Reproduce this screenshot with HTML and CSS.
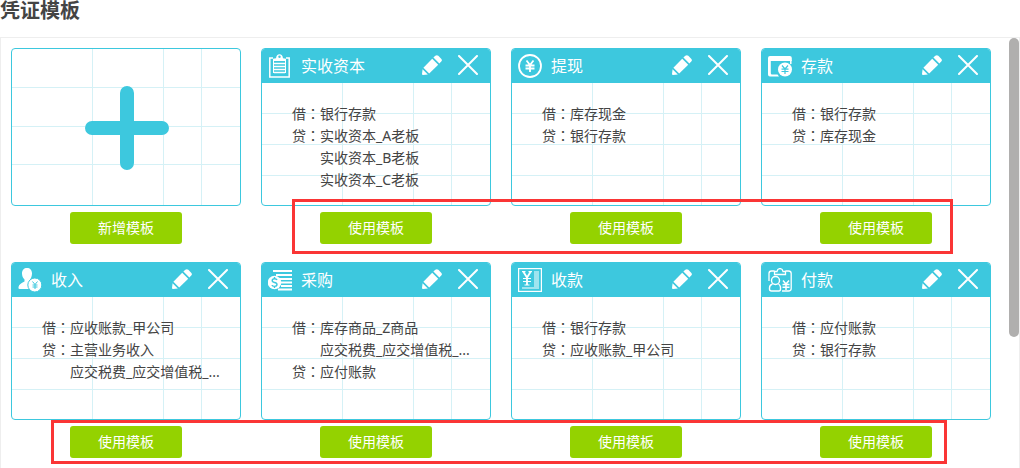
FILE: index.html
```html
<!DOCTYPE html>
<html lang="zh-CN">
<head>
  <meta charset="UTF-8">
  <meta name="viewport" content="width=device-width, initial-scale=1.0">
  <title>凭证模板</title>
  <link rel="stylesheet" href="styles.css">
</head>
<body>
  <!-- shared icons -->
  <svg class="sprite" width="0" height="0">
    <symbol id="icon-edit" viewBox="0 0 20 20">
      <path d="M10.2 3.8L16.2 9.8L7.2 18.6L1.4 12.8Z" fill="currentColor"/>
      <path d="M11.4 2.6L13.3 .8Q14.8 -.4 16.3 .8L19.2 3.7Q20.6 5.2 19.2 6.6L17.4 8.6Z" fill="currentColor"/>
      <path d="M.6 14.2L5.8 19.4L1 20Q0 20 0 19Z" fill="currentColor"/>
    </symbol>
    <symbol id="icon-close" viewBox="0 0 20 20">
      <path d="M1 1L19 19M19 1L1 19" stroke="currentColor" stroke-width="2" stroke-linecap="round"/>
    </symbol>
  </svg>

  <h1>凭证模板</h1>

  <div class="panel">
    <div class="template-list">
      <div class="template">
        <button class="card card-add" type="button" aria-label="新增模板">
          <svg class="plus" width="84" height="84" viewBox="0 0 84 84">
            <path d="M42 7V77M7 42H77" stroke="currentColor" stroke-width="14" stroke-linecap="round"/>
          </svg>
        </button>
        <button class="btn" type="button">新增模板</button>
      </div>

      <div class="template">
        <div class="card">
          <div class="card-header">
            <svg class="icon" viewBox="0 0 24 24" fill="none" stroke="currentColor">
              <path d="M5 4H1.8V23H21.2V4H18" stroke-width="1.5"/>
              <path d="M5.5 6V19M17.5 6V19" stroke-width="1"/>
              <path d="M5 7V4.8L8 4.2Q8.5 .3 11.5 .3Q14.5 .3 15 4.2L18 4.8V7Z" fill="currentColor" stroke="none"/>
              <circle cx="11.5" cy="2.8" r="1.2" fill="#3dc8de" stroke="none"/>
              <path d="M6 9.5H17M6 12.5H17M6 15.5H17M6 18.5H17" stroke-width="1.4"/>
            </svg>
            <h2>实收资本</h2>
            <div class="actions">
              <button type="button" aria-label="编辑"><svg><use href="#icon-edit"/></svg></button>
              <button type="button" aria-label="删除"><svg><use href="#icon-close"/></svg></button>
            </div>
          </div>
          <dl class="entries">
            <dt>借<span class="colon" lang="zh-TW">：</span></dt>
            <dd>银行存款</dd>
            <dt>贷<span class="colon" lang="zh-TW">：</span></dt>
            <dd>实收资本_A老板</dd>
            <dd>实收资本_B老板</dd>
            <dd>实收资本_C老板</dd>
          </dl>
        </div>
        <button class="btn" type="button">使用模板</button>
      </div>

      <div class="template">
        <div class="card">
          <div class="card-header">
            <svg class="icon" viewBox="0 0 24 24" fill="none" stroke="currentColor">
              <circle cx="12" cy="12" r="11" stroke-width="1.8"/>
              <path d="M8.5 6.5L12 11L15.5 6.5M12 11V18M7.5 11.5H16.5M7.5 14.5H16.5" stroke-width="1.8"/>
            </svg>
            <h2>提现</h2>
            <div class="actions">
              <button type="button" aria-label="编辑"><svg><use href="#icon-edit"/></svg></button>
              <button type="button" aria-label="删除"><svg><use href="#icon-close"/></svg></button>
            </div>
          </div>
          <dl class="entries">
            <dt>借<span class="colon" lang="zh-TW">：</span></dt>
            <dd>库存现金</dd>
            <dt>贷<span class="colon" lang="zh-TW">：</span></dt>
            <dd>银行存款</dd>
          </dl>
        </div>
        <button class="btn" type="button">使用模板</button>
      </div>

      <div class="template">
        <div class="card">
          <div class="card-header">
            <svg class="icon" viewBox="0 0 24 24" fill="none" stroke="currentColor">
              <path d="M23.8 7V4Q23.8 2 21.8 2H2Q0 2 0 4V20.5Q0 22.5 2 22.5H11L9.5 20.5H4Q2.8 20.5 2.8 19.3V7Z" fill="currentColor" stroke="none"/>
              <path d="M22.8 6V10" stroke-width="1.5"/>
              <circle cx="17" cy="15.5" r="7" fill="currentColor" stroke="none"/>
              <path d="M14 11.5L17 15L20 11.5M17 15V20M13.5 15.2H20.5M13.5 17.5H20.5" stroke="#3dc8de" stroke-width="1.2"/>
            </svg>
            <h2>存款</h2>
            <div class="actions">
              <button type="button" aria-label="编辑"><svg><use href="#icon-edit"/></svg></button>
              <button type="button" aria-label="删除"><svg><use href="#icon-close"/></svg></button>
            </div>
          </div>
          <dl class="entries">
            <dt>借<span class="colon" lang="zh-TW">：</span></dt>
            <dd>银行存款</dd>
            <dt>贷<span class="colon" lang="zh-TW">：</span></dt>
            <dd>库存现金</dd>
          </dl>
        </div>
        <button class="btn" type="button">使用模板</button>
      </div>

      <div class="template">
        <div class="card">
          <div class="card-header">
            <svg class="icon" viewBox="0 0 24 24" fill="none" stroke="currentColor">
              <path d="M9 0C12 0 14 2 14 5.5C14 8 13 10.5 12 11.5V13L14 14.5L12 21H1.5Q0 21 .5 19C1 16 3 15.500 6.500 13.500V11.500C5 10 4 8 4 5.500C4 2 6 0 9 0Z" fill="currentColor" stroke="none"/>
              <circle cx="16.8" cy="17" r="7" fill="currentColor" stroke="#3dc8de" stroke-width="1"/>
              <path d="M14.5 13.5L17 16.5L19.5 13.5M17 16.5V21M14.5 17H19.5M14.5 19H19.5" stroke="#3dc8de" stroke-width="1"/>
            </svg>
            <h2>收入</h2>
            <div class="actions">
              <button type="button" aria-label="编辑"><svg><use href="#icon-edit"/></svg></button>
              <button type="button" aria-label="删除"><svg><use href="#icon-close"/></svg></button>
            </div>
          </div>
          <dl class="entries">
            <dt>借<span class="colon" lang="zh-TW">：</span></dt>
            <dd>应收账款_甲公司</dd>
            <dt>贷<span class="colon" lang="zh-TW">：</span></dt>
            <dd>主营业务收入</dd>
            <dd>应交税费_应交增值税_...</dd>
          </dl>
        </div>
        <button class="btn" type="button">使用模板</button>
      </div>

      <div class="template">
        <div class="card">
          <div class="card-header">
            <svg class="icon" viewBox="0 0 24 24" fill="none" stroke="currentColor">
              <path d="M5 3H24M8 7H24M11 11H24M13 14.500H24M13 18H24M10 21.500H24" stroke-width="2"/>
              <circle cx="6.500" cy="14.500" r="6.800" fill="currentColor" stroke="none"/>
              <path d="M9 12Q8.5 10.800 6.500 10.800Q4.200 10.800 4.200 12.600Q4.200 14.200 6.500 14.500Q9 14.900 9 16.600Q9 18.400 6.500 18.400Q4.200 18.400 4 17M6.500 9V11M6.500 18V20" stroke="#3dc8de" stroke-width="1.400"/>
            </svg>
            <h2>采购</h2>
            <div class="actions">
              <button type="button" aria-label="编辑"><svg><use href="#icon-edit"/></svg></button>
              <button type="button" aria-label="删除"><svg><use href="#icon-close"/></svg></button>
            </div>
          </div>
          <dl class="entries">
            <dt>借<span class="colon" lang="zh-TW">：</span></dt>
            <dd>库存商品_Z商品</dd>
            <dd>应交税费_应交增值税_...</dd>
            <dt>贷<span class="colon" lang="zh-TW">：</span></dt>
            <dd>应付账款</dd>
          </dl>
        </div>
        <button class="btn" type="button">使用模板</button>
      </div>

      <div class="template">
        <div class="card">
          <div class="card-header">
            <svg class="icon" viewBox="0 0 24 24" fill="none" stroke="currentColor">
              <rect x=".6" y=".6" width="22.8" height="22.8" stroke-width="1.2"/>
              <path d="M16 3H21V21H4V19H16Z" fill="currentColor" stroke="none" opacity=".5"/>
              <path d="M5.5 4L9 9.5L12.5 4M9 9.5V17" stroke-width="1.8"/>
              <path d="M4 3.7H7.5M10.5 3.7H14M5 10.5H13M5 13.5H13M6.5 17H11.5" stroke-width="1.2"/>
            </svg>
            <h2>收款</h2>
            <div class="actions">
              <button type="button" aria-label="编辑"><svg><use href="#icon-edit"/></svg></button>
              <button type="button" aria-label="删除"><svg><use href="#icon-close"/></svg></button>
            </div>
          </div>
          <dl class="entries">
            <dt>借<span class="colon" lang="zh-TW">：</span></dt>
            <dd>银行存款</dd>
            <dt>贷<span class="colon" lang="zh-TW">：</span></dt>
            <dd>应收账款_甲公司</dd>
          </dl>
        </div>
        <button class="btn" type="button">使用模板</button>
      </div>

      <div class="template">
        <div class="card">
          <div class="card-header">
            <svg class="icon" viewBox="0 0 24 24" fill="none" stroke="currentColor">
              <path d="M1 13V5.5Q1 3 3.5 3H6.5M17.5 3H20.5Q23.2 3 23.2 5.5V20.5Q23.2 23 20.5 23H14" stroke-width="1.3"/>
              <path d="M6.5 6.5V3.5H9Q9.5 .6 12 .6Q14.5 .6 15 3.5H17.5V6.5Z" stroke-width="1.3"/>
              <circle cx="7.5" cy="12.5" r="4" stroke-width="1.4"/>
              <path d="M4.5 16Q1.5 17 1.5 20V21Q1.5 23 3.5 23H11Q12.5 23 12.5 21V19Q12 17 10.5 16" stroke-width="1.4"/>
              <path d="M15 12.5L18 16L21 12.5M18 16V22M14.5 16.5H21.500M14.5 19.2H21.500" stroke-width="1.5"/>
            </svg>
            <h2>付款</h2>
            <div class="actions">
              <button type="button" aria-label="编辑"><svg><use href="#icon-edit"/></svg></button>
              <button type="button" aria-label="删除"><svg><use href="#icon-close"/></svg></button>
            </div>
          </div>
          <dl class="entries">
            <dt>借<span class="colon" lang="zh-TW">：</span></dt>
            <dd>应付账款</dd>
            <dt>贷<span class="colon" lang="zh-TW">：</span></dt>
            <dd>银行存款</dd>
          </dl>
        </div>
        <button class="btn" type="button">使用模板</button>
      </div>
    </div>

    <div class="scroll-thumb"></div>
    <!-- red frames around the "use template" buttons -->
    <div class="mark mark-top"></div>
    <div class="mark mark-bottom"></div>
  </div>
</body>
</html>
```

FILE: styles.css
```css
* {
  box-sizing: border-box;
}

body {
  margin: 0;
  height: 100vh;
  display: flex;
  flex-direction: column;
  overflow: hidden;
  background: #fff;
  color: #444;
  font-family: "Noto Sans", "Noto Sans CJK SC", sans-serif;
  font-size: 14px;
}

h1 {
  margin: 0 0 15px;
  font-size: 20px;
  line-height: 22px;
}

h2 {
  margin: 0;
  font-size: 16px;
  font-weight: normal;
  line-height: 24px;
}

button {
  padding: 0;
  border: none;
  background: none;
  color: inherit;
  font: inherit;
  cursor: pointer;
}

.sprite {
  position: absolute;
}

.panel {
  position: relative;
  flex: 1;
  min-height: 0;
  padding: 10px;
  overflow: hidden;
  border: 1px solid #eee;
  border-bottom: none;
}

.template-list {
  display: grid;
  grid-template-columns: repeat(auto-fill, 230px);
  gap: 18px 20px;
}

.template {
  display: flex;
  flex-direction: column;
  align-items: center;
  gap: 6px;
}

.card {
  width: 100%;
  height: 158px;
  border: 1px solid #3dc8de;
  border-radius: 4px;
  overflow: hidden;
  /* ruled paper lines */
  background-image:
    linear-gradient(#d5f1f6, #d5f1f6),
    linear-gradient(#d5f1f6, #d5f1f6),
    linear-gradient(#d5f1f6, #d5f1f6),
    linear-gradient(#d5f1f6, #d5f1f6),
    linear-gradient(#d5f1f6, #d5f1f6),
    linear-gradient(#d5f1f6, #d5f1f6);
  background-repeat: no-repeat;
  background-size: 1px 100%, 1px 100%, 1px 100%, 100% 1px, 100% 1px, 100% 1px;
  background-position: 80px 0, 151px 0, 189px 0, 0 64px, 0 95px, 0 126px;
}

.card-add {
  display: flex;
  align-items: center;
  justify-content: center;
  padding: 2px 0 0 2px;
  color: #3dc8de;
  background-position: 80px 0, 151px 0, 189px 0, 0 38px, 0 77px, 0 115px;
}

.plus {
  display: block;
}

.card-header {
  display: flex;
  align-items: flex-start;
  gap: 9px;
  height: 34px;
  padding: 5px 12px 0 6px;
  background: #3dc8de;
  color: #fff;
}

.icon {
  width: 24px;
  height: 24px;
}

.actions {
  display: flex;
  gap: 16px;
  margin: 1px 0 0 auto;
}

.actions button,
.actions svg {
  display: block;
  width: 20px;
  height: 20px;
}

.entries {
  display: grid;
  grid-template-columns: 28px 1fr;
  margin: 0;
  padding: 20px 10px 0 30px;
  line-height: 22px;
}

.entries dt {
  grid-column: 1;
}

.entries dd {
  grid-column: 2;
  margin: 0;
  white-space: nowrap;
}

/* centred full-width colon */
.colon {
  font-family: "Noto Sans CJK TC", sans-serif;
  line-height: 0;
}

.btn {
  width: 112px;
  height: 32px;
  padding-bottom: 2px;
  border-radius: 3px;
  background: #94d200;
  color: #fff;
}

.scroll-thumb {
  position: absolute;
  top: 0;
  right: 0;
  width: 10px;
  height: 299px;
  border-radius: 5px;
  background: #b0afae;
}

.mark {
  position: absolute;
  border: 3px solid #fa3535;
  pointer-events: none;
}

.mark-top {
  top: 161px;
  left: 291px;
  width: 661px;
  height: 55px;
}

.mark-bottom {
  top: 382px;
  left: 50px;
  width: 896px;
  height: 44px;
}
```
